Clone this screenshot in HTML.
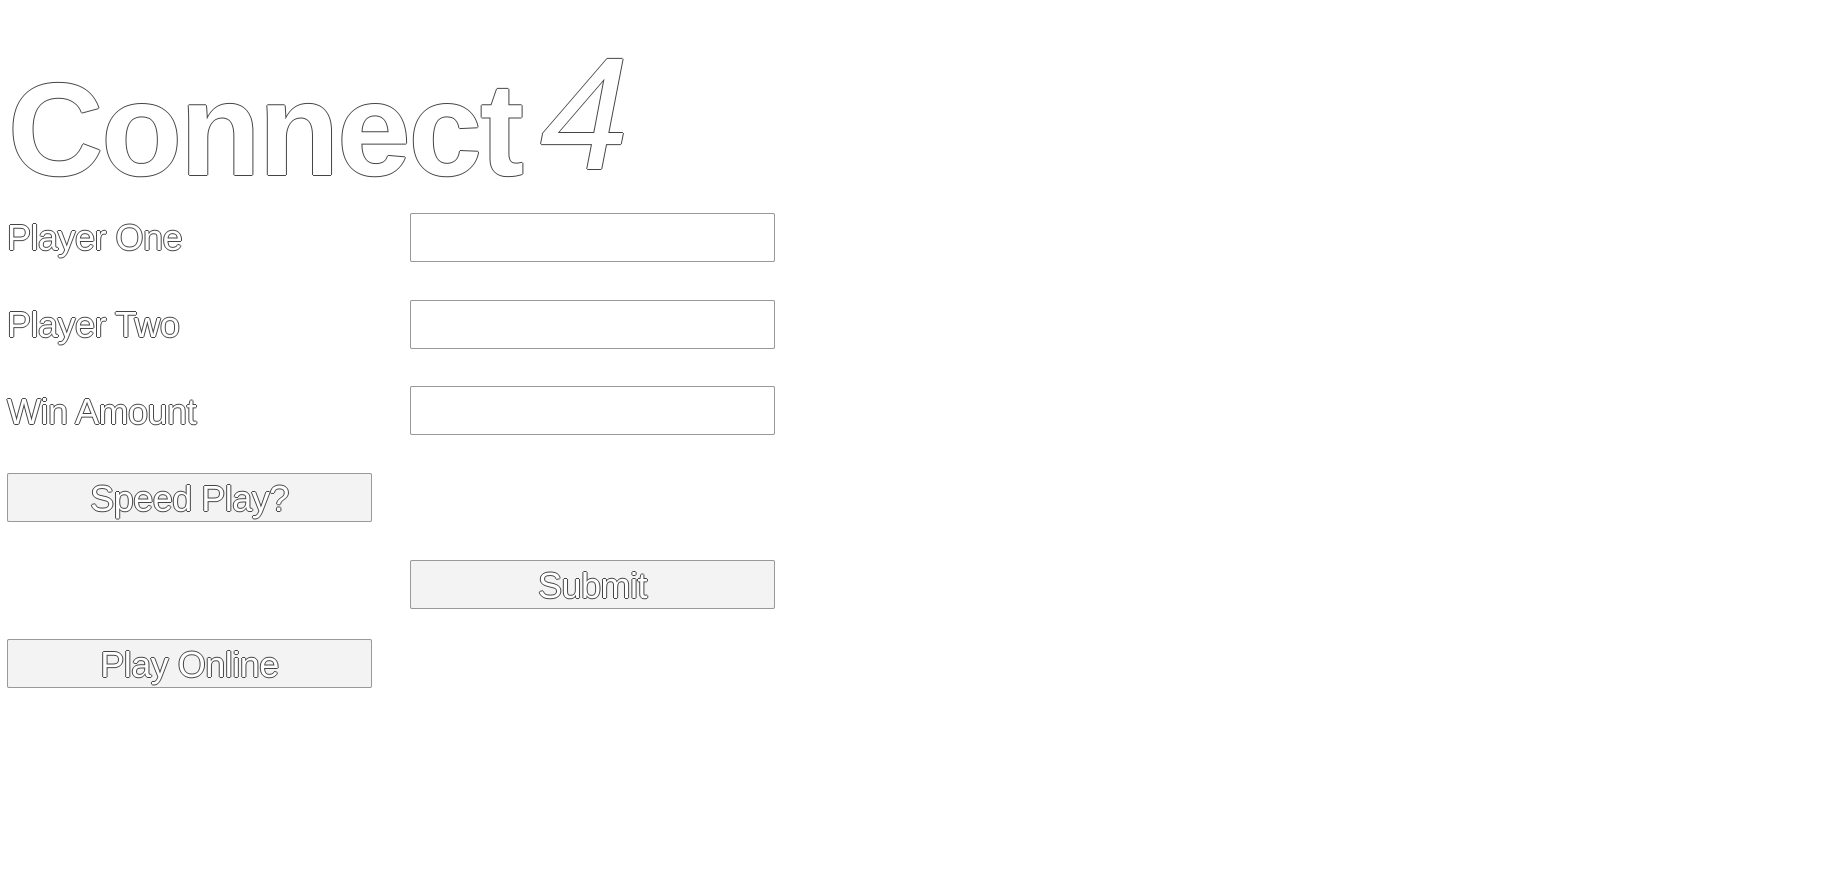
<!DOCTYPE html>
<html><head><meta charset="utf-8"><style>
html,body{margin:0;padding:0;background:#fff;width:1842px;height:892px;overflow:hidden;font-family:"Liberation Sans",sans-serif}
.o{color:#fff;text-shadow:1px 0 0 #444,-1px 0 0 #444,0 1px 0 #444,0 -1px 0 #444}
.abs{position:absolute}
.logo{left:8px;top:50px;font-size:132px;line-height:140px;letter-spacing:-2px;font-weight:bold}
.four{font-style:italic;font-size:160px;line-height:140px;margin-left:18px;font-weight:normal;position:relative;top:-6px}
.lbl{left:7px;font-size:36px;line-height:40px;letter-spacing:-0.5px}
.inp{left:410px;width:363px;height:47px;border:1px solid #999;border-radius:2px;background:#fff}
.btn{width:363px;height:47px;border:1px solid #999;border-radius:2px;background:#f3f3f3;text-align:center;font-size:36px;line-height:49px;letter-spacing:-0.5px}
</style></head><body>
<div class="abs logo o">Connect<span class="four">4</span></div>
<div class="abs lbl o" style="top:218px">Player One</div>
<div class="abs inp" style="top:213px"></div>
<div class="abs lbl o" style="top:305px">Player Two</div>
<div class="abs inp" style="top:300px"></div>
<div class="abs lbl o" style="top:392px">Win Amount</div>
<div class="abs inp" style="top:386px"></div>
<div class="abs btn o" style="left:7px;top:473px">Speed Play?</div>
<div class="abs btn o" style="left:410px;top:560px">Submit</div>
<div class="abs btn o" style="left:7px;top:639px">Play Online</div>
</body></html>
